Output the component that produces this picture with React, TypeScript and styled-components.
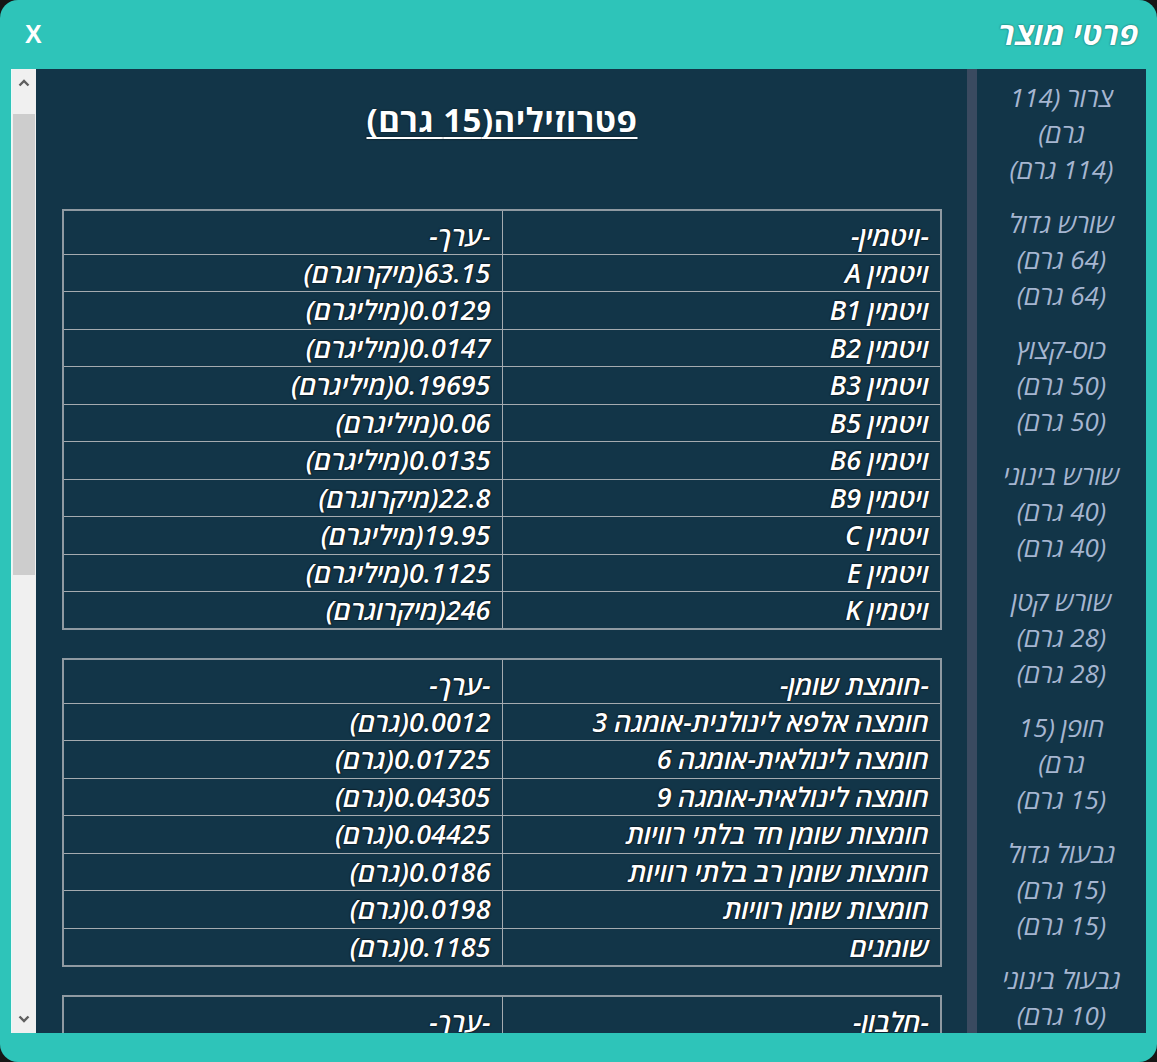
import React from 'react'
import styled, { createGlobalStyle } from 'styled-components'

const GlobalStyle = createGlobalStyle`
  html, body {
    margin: 0;
    padding: 0;
    background: #161616;
  }
  body {
    width: 1157px;
    height: 1062px;
    overflow: hidden;
    font-family: 'Open Sans', 'DejaVu Sans', 'Liberation Sans', sans-serif;
  }
`

const TEAL = '#2ec4b9'
const PANEL = '#123548'

type Row = [string, string]

const sections: { title: string; rows: Row[] }[] = [
  {
    title: '-ויטמין-',
    rows: [
      ['ויטמין A', '63.15(מיקרוגרם)'],
      ['ויטמין B1', '0.0129(מיליגרם)'],
      ['ויטמין B2', '0.0147(מיליגרם)'],
      ['ויטמין B3', '0.19695(מיליגרם)'],
      ['ויטמין B5', '0.06(מיליגרם)'],
      ['ויטמין B6', '0.0135(מיליגרם)'],
      ['ויטמין B9', '22.8(מיקרוגרם)'],
      ['ויטמין C', '19.95(מיליגרם)'],
      ['ויטמין E', '0.1125(מיליגרם)'],
      ['ויטמין K', '246(מיקרוגרם)'],
    ],
  },
  {
    title: '-חומצת שומן-',
    rows: [
      ['חומצה אלפא לינולנית-אומגה 3', '0.0012(גרם)'],
      ['חומצה לינולאית-אומגה 6', '0.01725(גרם)'],
      ['חומצה לינולאית-אומגה 9', '0.04305(גרם)'],
      ['חומצות שומן חד בלתי רוויות', '0.04425(גרם)'],
      ['חומצות שומן רב בלתי רוויות', '0.0186(גרם)'],
      ['חומצות שומן רוויות', '0.0198(גרם)'],
      ['שומנים', '0.1185(גרם)'],
    ],
  },
  {
    title: '-חלבון-',
    rows: [['חלבון', '0.4455(גרם)']],
  },
]

// each measure is shown as wrapped in the original
const measures: string[][] = [
  ['צרור (114', 'גרם)', '(114 גרם)'],
  ['שורש גדול', '(64 גרם)', '(64 גרם)'],
  ['כוס-קצוץ', '(50 גרם)', '(50 גרם)'],
  ['שורש בינוני', '(40 גרם)', '(40 גרם)'],
  ['שורש קטן', '(28 גרם)', '(28 גרם)'],
  ['חופן (15', 'גרם)', '(15 גרם)'],
  ['גבעול גדול', '(15 גרם)', '(15 גרם)'],
  ['גבעול בינוני', '(10 גרם)', '(10 גרם)'],
]

const App: React.FC = () => {
  return (
    <>
      <GlobalStyle />
      <Window>
        <Header>
          <HeaderTitle>פרטי מוצר</HeaderTitle>
          <CloseButton>X</CloseButton>
        </Header>
        <Body>
          <Scrollbar>
            <ScrollArrow>
              <svg width="12" height="8" viewBox="0 0 12 8">
                <polyline points="1.5,6.5 6,2 10.5,6.5" fill="none" stroke="#5f5f5f" strokeWidth="2.4" />
              </svg>
            </ScrollArrow>
            <Track>
              <Thumb />
            </Track>
            <ScrollArrow>
              <svg width="12" height="8" viewBox="0 0 12 8">
                <polyline points="1.5,1.5 6,6 10.5,1.5" fill="none" stroke="#5f5f5f" strokeWidth="2.4" />
              </svg>
            </ScrollArrow>
          </Scrollbar>
          <MainPanel>
            <ProductTitle>פטרוזיליה(15 גרם)</ProductTitle>
            {sections.map((s) => (
              <DataTable key={s.title}>
                <tbody>
                  <HeadRow>
                    <Cell>{s.title}</Cell>
                    <Cell>-ערך-</Cell>
                  </HeadRow>
                  {s.rows.map((r) => (
                    <DataRow key={r[0]}>
                      <Cell>{r[0]}</Cell>
                      <Cell>{r[1]}</Cell>
                    </DataRow>
                  ))}
                </tbody>
              </DataTable>
            ))}
          </MainPanel>
          <Divider />
          <Sidebar>
            {measures.map((m, i) => (
              <Measure key={i}>
                {m.map((line, j) => (
                  <MeasureLine key={j}>{line}</MeasureLine>
                ))}
              </Measure>
            ))}
          </Sidebar>
        </Body>
      </Window>
    </>
  )
}

const Window = styled.div`
  width: 1157px;
  height: 1062px;
  background: ${TEAL};
  border-radius: 18px;
  display: flex;
  flex-direction: column;
  overflow: hidden;
`

const Header = styled.div`
  height: 69px;
  flex-shrink: 0;
  display: flex;
  direction: rtl;
  align-items: center;
  justify-content: space-between;
  padding: 0 18px 0 25px;
`

const HeaderTitle = styled.div`
  color: #fff;
  font-size: 31px;
  font-weight: 700;
  font-style: italic;
  letter-spacing: 0.5px;
  text-shadow: 0 0 2px rgba(0, 0, 0, 0.6);
  margin-top: -3px;
`

const CloseButton = styled.div`
  color: #fff;
  font-family: 'Liberation Sans', sans-serif;
  font-size: 25px;
  font-weight: 700;
  line-height: 25px;
  margin-top: -1px;
`

const Body = styled.div`
  flex: 1;
  display: flex;
  padding: 0 11px 29px 11px;
  min-height: 0;
`

const Scrollbar = styled.div`
  width: 25px;
  flex-shrink: 0;
  background: #f0f0f0;
  border-left: 1px solid #e8fbf9;
  box-sizing: border-box;
  display: flex;
  flex-direction: column;
`

const ScrollArrow = styled.div`
  height: 28px;
  display: flex;
  align-items: center;
  justify-content: center;
`

const Track = styled.div`
  flex: 1;
  padding-top: 17px;
`

const Thumb = styled.div`
  height: 461px;
  margin: 0 1px;
  background: #cdcdcd;
`

const MainPanel = styled.div`
  flex: 1;
  background: ${PANEL};
  direction: rtl;
  overflow: hidden;
  padding: 33px 25px 0 26px;
`

const ProductTitle = styled.div`
  text-align: center;
  color: #fff;
  font-size: 33px;
  font-weight: 700;
  line-height: 36px;
  letter-spacing: 0.5px;
  text-decoration: underline;
  text-decoration-thickness: 2px;
  text-underline-offset: 5px;
  text-shadow: 0 0 2px rgba(0, 0, 0, 0.7);
  margin-bottom: 71px;
`

const DataTable = styled.table`
  width: 880px;
  border-collapse: collapse;
  border: 2px solid #8f9aa2;
  margin-bottom: 28px;
  table-layout: fixed;
`

const HeadRow = styled.tr`
  height: 44px;
  td {
    padding-top: 8px;
  }
`

const DataRow = styled.tr`
  height: 37.5px;
`

const Cell = styled.td`
  width: 50%;
  border: 1px solid #a5abb0;
  padding: 0 11px 0 8px;
  text-align: right;
  color: #fff;
  font-size: 27px;
  font-weight: 600;
  font-style: italic;
  line-height: 30px;
  text-shadow: 0 0 2px #000, 0 0 1px #000;
  white-space: nowrap;
`

const Divider = styled.div`
  width: 10px;
  flex-shrink: 0;
  background: #3a4a60;
`

const Sidebar = styled.div`
  width: 169px;
  flex-shrink: 0;
  background: ${PANEL};
  direction: rtl;
  overflow: hidden;
  padding-top: 10px;
`

const Measure = styled.div`
  margin-bottom: 18px;
  text-align: center;
`

const MeasureLine = styled.div`
  color: #a6b6d1;
  font-size: 26px;
  font-style: italic;
  line-height: 36px;
  white-space: nowrap;
`

export default App
